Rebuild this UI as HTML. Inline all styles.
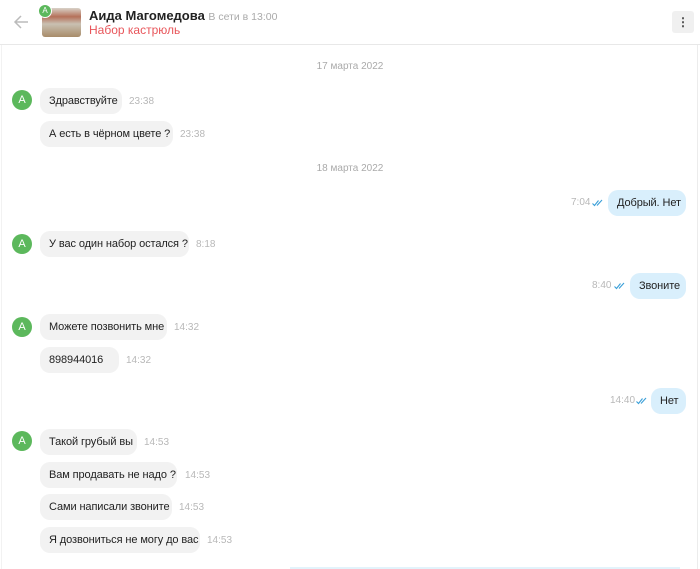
<!DOCTYPE html>
<html><head><meta charset="utf-8"><style>
*{margin:0;padding:0;box-sizing:border-box}
body{width:700px;height:569px;background:#fff;font-family:"Liberation Sans",Arial,sans-serif;position:relative;overflow:hidden;color:#222}
.a{position:absolute}
.hdr{left:0;top:0;width:700px;height:45px;border-bottom:1px solid #e8e8e8}
.av{width:20px;height:20px;border-radius:50%;background:#5cb85c;color:#fff;font-size:11px;line-height:20px;text-align:center;left:12px}
.b{height:26px;border-radius:10px;background:#f2f2f2;font-size:11px;line-height:26px;padding-left:9px;white-space:nowrap;overflow:hidden;letter-spacing:-0.1px}
.r{background:#d9effc}
.t{font-size:10px;color:#b8b8b8;line-height:26px}
.d{font-size:10px;color:#aaa;width:700px;text-align:center;left:0}
.k{position:absolute;width:12px;height:8px}
</style></head><body>
<div class="a" style="left:697px;top:45px;width:1px;height:524px;background:#ececec"></div>
<div class="a" style="left:1px;top:45px;width:1px;height:524px;background:#f2f2f2"></div>
<div class="a hdr"></div>
<svg class="a" style="left:13px;top:14px" width="16" height="16" viewBox="0 0 16 16"><path d="M15 8H2M8 2L2 8l6 6" stroke="#bbb" stroke-width="1.5" fill="none"/></svg>
<div class="a" style="left:42px;top:8px;width:39px;height:29px;border-radius:3px;background:linear-gradient(180deg,#d8d2c8 0%,#b5715a 30%,#c9c0b2 55%,#a88c6a 100%)"></div>
<div class="a" style="left:38px;top:4px;width:14px;height:14px;border-radius:50%;background:#5cb85c;border:1px solid #fff;color:#fff;font-size:8px;line-height:12px;text-align:center">A</div>
<div class="a" style="left:89px;top:8px;font-size:13px;font-weight:bold;color:#222;white-space:nowrap">Аида Магомедова <span style="font-weight:normal;font-size:10.5px;color:#aaa">В сети в 13:00</span></div>
<div class="a" style="left:89px;top:23px;font-size:12px;color:#e8555a">Набор кастрюль</div>
<div class="a" style="left:672px;top:11px;width:22px;height:22px;background:#f0f0f0;border-radius:3px;color:#444;font-size:12px;text-align:center;line-height:22px;font-weight:bold">⋮</div>

<div class="a d" style="top:61px">17 марта 2022</div>
<div class="a av" style="top:90px">A</div>
<div class="a b" style="left:40px;top:88px;width:82px">Здравствуйте</div><div class="a t" style="left:129px;top:89px">23:38</div>
<div class="a b" style="left:40px;top:121px;width:133px">А есть в чёрном цвете ?</div><div class="a t" style="left:180px;top:122px">23:38</div>
<div class="a d" style="top:163px">18 марта 2022</div>
<div class="a t" style="left:571px;top:190px">7:04</div>
<svg class="k" style="left:592px;top:199px" viewBox="0 0 12 8"><path d="M0.5 4.5l2 2 4-5M5 6.5l5-5.5" stroke="#3a9fd8" stroke-width="1.1" fill="none"/></svg>
<div class="a b r" style="left:608px;top:190px;width:78px">Добрый. Нет</div>
<div class="a av" style="top:234px">A</div>
<div class="a b" style="left:40px;top:231px;width:149px">У вас один набор остался ?</div><div class="a t" style="left:196px;top:232px">8:18</div>
<div class="a t" style="left:592px;top:273px">8:40</div>
<svg class="k" style="left:614px;top:282px" viewBox="0 0 12 8"><path d="M0.5 4.5l2 2 4-5M5 6.5l5-5.5" stroke="#3a9fd8" stroke-width="1.1" fill="none"/></svg>
<div class="a b r" style="left:630px;top:273px;width:56px">Звоните</div>
<div class="a av" style="top:317px">A</div>
<div class="a b" style="left:40px;top:314px;width:127px">Можете позвонить мне</div><div class="a t" style="left:174px;top:315px">14:32</div>
<div class="a b" style="left:40px;top:347px;width:79px">898944016</div><div class="a t" style="left:126px;top:348px">14:32</div>
<div class="a t" style="left:610px;top:388px">14:40</div>
<svg class="k" style="left:636px;top:397px" viewBox="0 0 12 8"><path d="M0.5 4.5l2 2 4-5M5 6.5l5-5.5" stroke="#3a9fd8" stroke-width="1.1" fill="none"/></svg>
<div class="a b r" style="left:651px;top:388px;width:35px">Нет</div>
<div class="a av" style="top:431px">A</div>
<div class="a b" style="left:40px;top:429px;width:97px">Такой грубый вы</div><div class="a t" style="left:144px;top:430px">14:53</div>
<div class="a b" style="left:40px;top:462px;width:137px">Вам продавать не надо ?</div><div class="a t" style="left:185px;top:463px">14:53</div>
<div class="a b" style="left:40px;top:494px;width:132px">Сами написали звоните</div><div class="a t" style="left:179px;top:495px">14:53</div>
<div class="a b" style="left:40px;top:527px;width:160px">Я дозвониться не могу до вас</div><div class="a t" style="left:207px;top:528px">14:53</div>
<div class="a" style="left:290px;top:567px;width:390px;height:2px;background:#e3f3fb"></div>
</body></html>
